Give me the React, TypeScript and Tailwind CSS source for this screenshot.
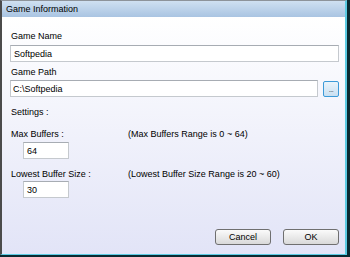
import React from "react";

const Input = ({ value, className }: { value: string; className: string }) => (
  <div
    className={
      "h-[17px] bg-white border border-[#c5c9ce] border-t-[#a7acb3] flex items-center text-[9px] leading-[12px] text-black " +
      className
    }
  >
    {value}
  </div>
);

const Btn = ({ label }: { label: string }) => (
  <div className="w-[56px] h-[16px] rounded-[3px] border border-[#6f6f6f] bg-linear-to-b from-[#fbfbfb] to-[#d9d9d9] flex items-center justify-center text-[9px] leading-[12px] text-black">
    {label}
  </div>
);

export default function App() {
  return (
    <div className="w-[350px] h-[257px] bg-[#0a2a31] pr-[3px] pb-[2px] font-['Liberation_Sans',Arial,sans-serif] text-black">
      <div className="h-full flex flex-col border-t border-t-[#8d939a] border-l-2 border-l-[#4b4b4b] border-r-2 border-r-[#5ccbe3] border-b border-b-[#5ccbe3]">
        <div className="h-[16px] shrink-0 bg-linear-to-b from-[#cfe0f1] to-[#a9c4e2] flex items-center pl-[4px] text-[9px] leading-[12px]">
          Game Information
        </div>
        <div className="flex-1 bg-linear-to-b from-[#ffffff] to-[#e2e4f7] flex flex-col relative">
          <div className="pl-[9px] mt-[13px] text-[9px] leading-[12px]">Game Name</div>
          <Input value="Softpedia" className="ml-[8px] mr-[6px] mt-[3px] pl-[3px]" />
          <div className="pl-[9px] mt-[4px] text-[9px] leading-[12px]">Game Path</div>
          <div className="flex items-center ml-[8px] mr-[6px] mt-[2px] gap-[5px]">
            <Input value="C:\Softpedia" className="flex-1 pl-[2px]" />
            <div className="w-[16px] h-[16px] rounded-[2px] border border-[#3c9ad8] bg-linear-to-b from-[#eaf4fb] to-[#c9dff1] flex items-end justify-center pb-[3px]">
              <span className="text-[7px] leading-[7px] text-[#333] tracking-[-0.5px]">...</span>
            </div>
          </div>
          <div className="pl-[9px] mt-[9px] text-[9px] leading-[12px]">Settings :</div>
          <div className="flex pl-[9px] mt-[10px] text-[9px] leading-[12px]">
            <div className="w-[117px]">Max Buffers :</div>
            <div>(Max Buffers Range is 0 ~ 64)</div>
          </div>
          <Input value="64" className="w-[46px] ml-[21px] mt-[2px] pl-[3px]" />
          <div className="flex pl-[9px] mt-[9px] text-[9px] leading-[12px]">
            <div className="w-[117px]">Lowest Buffer Size :</div>
            <div>(Lowest Buffer Size Range is 20 ~ 60)</div>
          </div>
          <Input value="30" className="w-[46px] ml-[21px] mt-[1px] pl-[3px]" />
          <div className="flex justify-end gap-[12px] mr-[6px] mt-[31px]">
            <Btn label="Cancel" />
            <Btn label="OK" />
          </div>
        </div>
      </div>
    </div>
  );
}
